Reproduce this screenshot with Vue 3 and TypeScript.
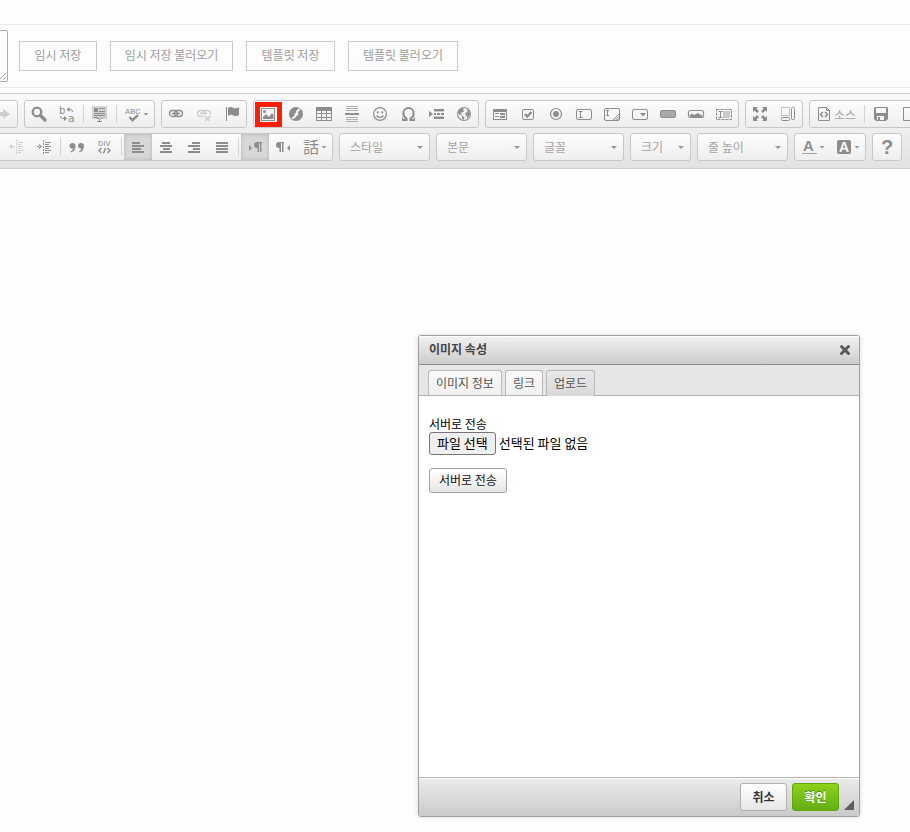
<script setup lang="ts">
import { ref } from 'vue'

interface Tool {
  icon?: string
  title?: string
  sep?: boolean
  off?: boolean
  active?: boolean
  marked?: boolean
  arrow?: boolean
  text?: string
}

interface Combo {
  label: string
  narrow?: boolean
}

const drafts = [
  { label: '임시 저장', width: 78 },
  { label: '임시 저장 불러오기', width: 123 },
  { label: '템플릿 저장', width: 89 },
  { label: '템플릿 불러오기', width: 110 },
]

const sep: Tool = { sep: true }

const topGroups: Tool[][] = [
  [{ icon: 'redo', title: '다시 실행', off: true }],
  [
    { icon: 'find', title: '찾기' },
    { icon: 'replace', title: '바꾸기' },
    sep,
    { icon: 'selectAll', title: '모두 선택' },
    sep,
    { icon: 'spell', title: '맞춤법 검사', arrow: true },
  ],
  [
    { icon: 'link', title: '링크 삽입' },
    { icon: 'unlink', title: '링크 지우기', off: true },
    { icon: 'flag', title: '책갈피' },
  ],
  [
    { icon: 'image', title: '이미지', marked: true },
    { icon: 'flash', title: '플래시' },
    { icon: 'table', title: '표' },
    { icon: 'rule', title: '가로 줄' },
    { icon: 'smiley', title: '이모티콘' },
    { icon: 'omega', title: '특수문자' },
    { icon: 'pageBreak', title: '페이지 나누기' },
    { icon: 'globe', title: '아이프레임' },
  ],
  [
    { icon: 'form', title: '폼' },
    { icon: 'checkbox', title: '체크박스' },
    { icon: 'radio', title: '라디오 버튼' },
    { icon: 'textField', title: '한 줄 입력 칸' },
    { icon: 'textArea', title: '여러 줄 입력 칸' },
    { icon: 'selectField', title: '선택 목록' },
    { icon: 'button', title: '버튼' },
    { icon: 'imageButton', title: '이미지 버튼' },
    { icon: 'hidden', title: '숨은 입력 칸' },
  ],
  [
    { icon: 'maximize', title: '최대화' },
    { icon: 'blocks', title: '블록 보기' },
  ],
  [
    { icon: 'source', title: '소스', text: '소스' },
    sep,
    { icon: 'save', title: '저장' },
    { icon: 'page', title: '새 문서' },
  ],
]

const paragraph: Tool[] = [
  { icon: 'outdent', title: '내어쓰기', off: true },
  { icon: 'indent', title: '들여쓰기' },
  sep,
  { icon: 'quote', title: '인용 단락' },
  { icon: 'div', title: 'DIV 컨테이너' },
  sep,
  { icon: 'alignLeft', title: '왼쪽 정렬', active: true },
  { icon: 'alignCenter', title: '가운데 정렬' },
  { icon: 'alignRight', title: '오른쪽 정렬' },
  { icon: 'justify', title: '양쪽 맞춤' },
  sep,
  { icon: 'ltr', title: '왼쪽에서 오른쪽', active: true },
  { icon: 'rtl', title: '오른쪽에서 왼쪽' },
  { icon: 'language', title: '언어 설정', arrow: true },
]

const combos: Combo[] = [
  { label: '스타일' },
  { label: '본문' },
  { label: '글꼴' },
  { label: '크기', narrow: true },
  { label: '줄 높이' },
]

const tailGroups: Tool[][] = [
  [
    { icon: 'textColor', title: '글자 색상', arrow: true },
    { icon: 'backColor', title: '배경 색상', arrow: true },
  ],
  [{ icon: 'about', title: '정보' }],
]

const bars = (rows: [number, number][]): string =>
  rows.map(([x, w], i) => `<rect x="${x}" y="${3 + 3 * i}" width="${w}" height="2"/>`).join('')

const sans = 'font-family="Liberation Sans, sans-serif"'
const small = 'font-family="Roboto, sans-serif" font-size="8"'
const line = 'fill="none" stroke="currentColor"'

const icons: Record<string, string> = {
  redo: '<path d="M3 6h5V3l7 5-7 5v-3H3z"/>',
  find: `<circle cx="6" cy="6" r="4.300" ${line} stroke-width="2.300"/><path d="M9.500 9.500l4.500 4.500" ${line} stroke-width="3.400" stroke-linecap="round"/>`,
  replace: `<text x="0" y="8" font-size="10" font-family="DejaVu Sans, sans-serif">b</text><text x="9" y="16" font-size="11" font-family="DejaVu Sans, sans-serif">a</text><path d="M9 3.500h2.500q2 0 2 2.500M1.500 10q0 2.500 2 2.500H6" ${line}/><path d="M10.500 1v5L7.500 3.500zM5 10v5l3-2.500z"/>`,
  selectAll: `<path d="M0 0h15v13h-5v-1H5v1H0z" opacity=".35"/><path d="M2 2h4v4H2zM7 2h6v1H7zM7 5h6v1H7zM2 7h11v1H2zM2 9h11v1H2zM2 11h4v1H2z"/><path d="M5 12.500h2M8 12.500h2M7.500 13v3M5 15.500h5" ${line}/>`,
  spell: `<text x="0" y="8" ${small}>ABC</text><path d="M4.500 11l3 3.200L13 9" ${line} stroke-width="2.400"/>`,
  link: `<rect x="1.500" y="4.500" width="8" height="6" rx="3" ${line} stroke-width="1.300"/><rect x="6.500" y="4.500" width="8" height="6" rx="3" ${line} stroke-width="1.300"/><path d="M4 7.500h8" ${line} stroke-width="1.600"/>`,
  unlink: `<path d="M7.500 10.500h-3a3 3 0 0 1 0-6h2a3 3 0 0 1 3 2M14 9a3 3 0 0 0-2.500-4.500h-2a3 3 0 0 0-3 3M4 7.500h7" ${line} stroke-width="1.400"/><path d="M9 10l5 5M14 10l-5 5" ${line} stroke-width="1.700"/>`,
  flag: `<path d="M2 1h1v14H2z"/><path d="M4 2q3-2 5.500 0 2.500 1 5.500-1v8q-3 2-5.500.500Q7 8 4 10z"/>`,
  image: `<path d="M1 2v13h14V2zm1 1h12v11H2z" fill-rule="evenodd"/><circle cx="4.500" cy="5.500" r="1.500"/><path d="M3 13v-2l3-3 3 3 3-4 1.500 2v4z"/>`,
  flash: `<circle cx="8" cy="8" r="7"/><path d="M12 3.500Q9.500 3.800 8.800 6.500 7.800 11.500 4 12.300M6.500 8.300h4" fill="none" stroke="#fafafa" stroke-width="1.800"/>`,
  table: `<path d="M0 1h16v14H0zM1 5v2h4V5zm5 0v2h4V5zm5 0v2h4V5zM1 8v3h4V8zm5 0v3h4V8zm5 0v3h4V8zM1 12v2h4v-2zm5 0v2h4v-2zm5 0v2h4v-2z" fill-rule="evenodd"/>`,
  rule: `<path d="M1 7h14v2H1z"/><path d="M2 0h12v1H2zM2 2h12v1H2zM2 4h12v1H2zM2 11h12v1H2zM2 13h12v1H2zM2 15h12v1H2z" opacity=".65"/>`,
  smiley: `<circle cx="8" cy="8" r="6.400" ${line} stroke-width="1.200"/><circle cx="5.700" cy="6.300" r="1.100"/><circle cx="10.300" cy="6.300" r="1.100"/><path d="M4.500 9.500q3.500 4 7 0" ${line} stroke-width="1.200"/>`,
  omega: `<path d="M2 14h4.500v-1.500C4 11 3.200 9 3.400 7a5.100 5.100 0 0 1 10.200 0c.2 2-.6 4-3.100 5.500V14H15" ${line} stroke-width="2"/><path d="M2.500 11.500V14M14.500 11.500V14" ${line}/>`,
  pageBreak: `<path d="M1 5l4 3-4 3zM6 3h10v2H6zM6 11h10v2H6z"/><path d="M6 7h2v2H6zM9 7h3v2H9zM13 7h3v2h-3z"/><path d="M6 5h10v1H6zM6 10h10v1H6z" opacity=".4"/>`,
  globe: `<circle cx="8" cy="8" r="6.500" ${line} stroke-width="1.100"/><path d="M2.500 5l3-3L8 2.500 7 4l1.500 1L6 6.500 4.500 7 6 9.500 4 9 2 7zM11 3l2 1.500 1 3.500-1.500 3-1.500 1-.5-2.500L9 8l1-1.500 1.500-.5zM6 10l2.500 1-1 3L6 12.500z"/>`,
  form: `<path d="M1 3h14v11H1zM2 6v7h12V6z" fill-rule="evenodd"/><path d="M3 7h4v1H3zM3 10h4v1H3zM8 7h5v2H8zM8 10h5v2H8z"/>`,
  checkbox: `<rect x="2.500" y="3.500" width="11" height="10" rx="1.500" ${line}/><path d="M5 8l2.200 2.500L11.500 6" ${line} stroke-width="2.300"/>`,
  radio: `<circle cx="8" cy="8" r="5.500" ${line} stroke-width="1.200"/><circle cx="8" cy="8" r="3"/>`,
  textField: `<rect x=".5" y="3.500" width="15" height="10" rx="1.500" ${line}/><path d="M2.500 5.500h4M4.500 5.500v6M2.500 11.500h4" ${line}/>`,
  textArea: `<rect x=".5" y="2.500" width="15" height="12" rx="1.500" ${line}/><path d="M2 4.500h3M3.500 4.500v5M2 9.500h3M9 14l6-6M11.500 14l3.500-3.500M13.500 14l1.500-1.500" ${line}/>`,
  selectField: `<rect x=".5" y="3.500" width="15" height="10" rx="1.500" ${line}/><path d="M8 7h6l-3 3.500z"/>`,
  button: `<rect x=".5" y="4.500" width="15" height="7" rx="1.500" fill="currentColor" fill-opacity=".75" stroke="currentColor"/>`,
  imageButton: `<rect x=".5" y="4.500" width="15" height="7" rx="2" ${line} stroke-width="1.200"/><path d="M2 11V9l2-1.500L6 9l2-1 2-1 2 1.500L14 9v2z"/>`,
  hidden: `<rect x=".5" y="3.500" width="15" height="10" ${line} stroke-dasharray="3 1"/><path d="M7 5h7v7H7z" opacity=".4"/><path d="M2.500 5.500h4M4.500 5.500v6M2.500 11.500h4" ${line}/>`,
  maximize: `<path d="M1 1h5L4.500 2.500l2.500 2.500-2 2-2.500-2.500L1 6zM15 1v5l-1.500-1.500L11 7 9 5l2.500-2.500L10 1zM1 15v-5l1.500 1.500L5 9l2 2-2.500 2.500L6 15zM15 15h-5l1.500-1.500L9 11l2-2 2.500 2.500L15 10z"/>`,
  blocks: `<path d="M1.500 1.500h8v8h-8z" ${line} stroke-dasharray="1 1"/><rect x="11.500" y="1.500" width="3" height="12" rx="1" ${line}/><rect x="1.500" y="11.500" width="8" height="3" rx="1" ${line}/>`,
  source: `<path d="M2.500 1.500h8l3 3v10h-11zM10.500 1.500v3h3" ${line}/><path d="M7 6L4.500 8.500 7 11M9 6l2.500 2.500L9 11" ${line} stroke-width="1.500"/>`,
  save: `<path d="M2.500 1h11A1.500 1.500 0 0 1 15 2.500V13l-2 2H3l-2-2V2.500A1.500 1.500 0 0 1 2.500 1zM3 2v5h10V2zM4 10v4h7v-4z" fill-rule="evenodd"/><path d="M5 11h2v3H5zM1 7h14v2H1z"/>`,
  page: `<path d="M2.500 1.500h8l3 3v10h-11z" ${line}/>`,
  outdent: `<path d="M4 7h3v1H4zM4 5v5L1 7.500zM8 1h1v2H8zM8 4h1v2H8zM8 7h1v2H8zM8 10h1v2H8zM8 13h1v2H8zM10 3h5v1h-5zM10 5h3v1h-3zM10 7h5v1h-5zM10 9h3v1h-3zM10 11h5v1h-5zM10 13h3v1h-3z"/>`,
  indent: `<path d="M1 7h3v1H1zM3 5v5l3-2.500zM7 1h1v2H7zM7 4h1v2H7zM7 7h1v2H7zM7 10h1v2H7zM7 13h1v2H7zM9 3h6v1H9zM9 5h4v1H9zM9 7h6v1H9zM9 9h4v1H9zM9 11h6v1H9zM9 13h4v1H9z"/>`,
  quote: `<path d="M3.500 4a3 3 0 0 1 3 3Q6.500 12 2 13.500L1.500 12.500Q4 11 4 9.500A2.800 2.800 0 1 1 3.500 4zM12 4a3 3 0 0 1 3 3q0 5-4.500 6.500l-.5-1Q12.500 11 12.500 9.500A2.800 2.800 0 1 1 12 4z"/>`,
  div: `<text x="1" y="7" ${small}>DIV</text><path d="M4.500 9L2 11.500 4.500 14M10.500 9l2.500 2.500-2.500 2.500M8.500 9l-2 5.500" ${line} stroke-width="1.400"/>`,
  alignLeft: bars([[2, 8], [2, 12], [2, 9], [2, 12]]),
  alignCenter: bars([[4, 8], [2, 12], [5, 7], [2, 12]]),
  alignRight: bars([[6, 8], [2, 12], [7, 7], [2, 12]]),
  justify: bars([[2, 12], [2, 12], [2, 12], [2, 12]]),
  ltr: `<path d="M2 6l3 3-3 3z"/><path d="M15 3h-5a3 3 0 0 0 0 6h.5v4H12V4h1v9h1.500V4h.5z"/>`,
  rtl: `<path d="M15 6l-3 3 3 3z"/><path d="M9 3H4a3 3 0 0 0 0 6h.5v4H6V4h1v9h1.500V4H9z"/>`,
  language: `<text x="0" y="14" font-size="16" font-family="Noto Sans CJK JP, sans-serif">話</text>`,
  textColor: `<text x="2" y="12" font-size="15" font-weight="bold" ${sans}>A</text><path d="M1 14h15v1H1z" opacity=".8"/>`,
  backColor: `<rect x="1" y="1" width="14" height="14" rx="2"/><text x="3" y="13" font-size="14" font-weight="bold" fill="#fafafa" ${sans}>A</text>`,
  about: `<text x="2" y="15" font-size="20" font-weight="bold" ${sans}>?</text>`,
}

const tabs = ['이미지 정보', '링크', '업로드']
const currentTab = ref(2)
const fileName = ref('선택된 파일 없음')

function pickFile(event: Event) {
  const files = (event.target as HTMLInputElement).files
  fileName.value = files && files.length ? files[0].name : '선택된 파일 없음'
}
</script>

<template>
  <div class="page">
    <form class="drafts" @submit.prevent>
      <textarea class="memo" aria-label="메모"></textarea>
      <button
        v-for="d in drafts"
        :key="d.label"
        type="button"
        class="draft"
        :style="{ width: d.width + 'px' }"
      >{{ d.label }}</button>
    </form>

    <div class="toolbar" role="toolbar">
      <div class="row">
        <div v-for="(group, g) in topGroups" :key="g" class="group">
          <template v-for="(t, i) in group" :key="i">
            <span v-if="t.sep" class="sep"></span>
            <button
              v-else
              type="button"
              class="tool"
              :class="{ off: t.off, marked: t.marked, wide: t.arrow, labelled: t.text }"
              :aria-label="t.title"
            >
              <svg class="icon" viewBox="0 0 16 16" fill="currentColor" v-html="icons[t.icon!]"></svg>
              <span v-if="t.text" class="caption">{{ t.text }}</span>
              <span v-if="t.arrow" class="caret"></span>
            </button>
          </template>
        </div>
      </div>

      <div class="row">
        <div class="group cut">
          <template v-for="(t, i) in paragraph" :key="i">
            <span v-if="t.sep" class="sep"></span>
            <button
              v-else
              type="button"
              class="tool"
              :class="{ off: t.off, active: t.active, wide: t.arrow }"
              :aria-label="t.title"
            >
              <svg class="icon" viewBox="0 0 16 16" fill="currentColor" v-html="icons[t.icon!]"></svg>
              <span v-if="t.arrow" class="caret"></span>
            </button>
          </template>
        </div>

        <div v-for="c in combos" :key="c.label" class="combo" :class="{ narrow: c.narrow }">
          <select class="combo-select" :aria-label="c.label">
            <option>{{ c.label }}</option>
          </select>
          <span class="caret"></span>
        </div>

        <div v-for="(group, g) in tailGroups" :key="'t' + g" class="group">
          <button
            v-for="t in group"
            :key="t.icon"
            type="button"
            class="tool"
            :class="{ wide: t.arrow }"
            :aria-label="t.title"
          >
            <svg class="icon" viewBox="0 0 16 16" fill="currentColor" v-html="icons[t.icon!]"></svg>
            <span v-if="t.arrow" class="caret"></span>
          </button>
        </div>
      </div>
    </div>

    <section class="dialog" role="dialog" aria-labelledby="dialog-title">
      <header class="title-bar">
        <h1 id="dialog-title" class="title">이미지 속성</h1>
        <button type="button" class="close" aria-label="닫기">
          <svg class="close-icon" viewBox="0 0 12 12">
            <path d="M2.500 2.500l7 7M9.500 2.500l-7 7" fill="none" stroke="#5a5a5a" stroke-width="3" stroke-linecap="round" />
          </svg>
        </button>
      </header>
      <div class="tabs" role="tablist">
        <button
          v-for="(tab, i) in tabs"
          :key="tab"
          type="button"
          role="tab"
          class="tab"
          :class="{ current: i === currentTab }"
          :aria-selected="i === currentTab"
          @click="currentTab = i"
        >{{ tab }}</button>
      </div>
      <div class="body">
        <label class="field-label" for="upload">서버로 전송</label>
        <div class="file">
          <span class="file-button">파일 선택</span>
          <span class="file-name">{{ fileName }}</span>
          <input id="upload" class="file-input" type="file" @change="pickFile" />
        </div>
        <button type="button" class="send">서버로 전송</button>
      </div>
      <footer class="footer">
        <button type="button" class="action">취소</button>
        <button type="button" class="action ok">확인</button>
        <span class="grip"></span>
      </footer>
    </section>
  </div>
</template>

<style>
body {
  background: #fdfdfd;
}
</style>

<style scoped>
.page {
  position: relative;
  box-sizing: border-box;
  min-height: 100vh;
  padding-top: 24px;
  overflow: hidden;
  font-family: "Noto Sans CJK KR", "Liberation Sans", sans-serif;
  font-size: 12px;
}

.page * {
  box-sizing: border-box;
}

button,
select,
textarea {
  margin: 0;
  padding: 0;
  font-family: inherit;
  font-size: 12px;
}

.drafts {
  display: flex;
  align-items: center;
  gap: 13px;
  height: 64px;
  border-top: 1px solid #e9e9e9;
  border-bottom: 1px solid #e9e9e9;
}

.memo {
  width: 60px;
  height: 52px;
  margin: 0 -2px 0 -52px;
  border: 1px solid #767676;
  border-radius: 2px;
  background: #fdfdfd;
  opacity: 0.6;
}

.draft {
  height: 30px;
  padding-bottom: 2px;
  border: 1px solid #cacaca;
  background: #fdfdfd;
  color: #9c9c9c;
  line-height: 26px;
  white-space: nowrap;
}

.toolbar {
  display: flex;
  flex-direction: column;
  gap: 5px;
  margin-top: 5px;
  padding: 6px 0 7px;
  border-top: 1px solid #cfcfcf;
  border-bottom: 1px solid #cfcfcf;
  background: linear-gradient(#fafafa, #e2e2e2);
  color: #8d8d8d;
}

.row {
  display: flex;
  gap: 6px;
  margin-left: -12px;
}

.group {
  display: flex;
  flex: none;
  height: 28px;
  border: 1px solid #c8c8c8;
  border-radius: 3px;
  background: linear-gradient(#fdfdfd, #eeeeee);
}

.cut {
  padding-left: 13px;
}

.tool {
  position: relative;
  display: flex;
  align-items: center;
  flex: none;
  width: 28px;
  height: 26px;
  padding-left: 6px;
  border: 0;
  background: none;
  color: inherit;
}

.wide {
  width: 35px;
  gap: 2px;
}

.labelled {
  width: 52px;
  gap: 2px;
}

.off {
  color: #cecece;
}

.active {
  background: #d8d8d8;
  box-shadow: inset 0 0 4px #b4b4b4;
}

.marked::after {
  content: "";
  position: absolute;
  inset: 1px 0 0 1px;
  border: 5px solid #ff1f00;
}

.icon {
  flex: none;
  width: 16px;
  height: 16px;
  overflow: visible;
}

.caption {
  color: #a3a3a3;
  white-space: nowrap;
}

.caret {
  flex: none;
  width: 6px;
  height: 3px;
  background: #979797;
  clip-path: polygon(0 0, 100% 0, 50% 100%);
}

.sep {
  width: 1px;
  height: 18px;
  margin: 4px 2px;
  background: #d3d3d3;
}

.combo {
  position: relative;
  flex: none;
  width: 91px;
  height: 28px;
}

.narrow {
  width: 61px;
}

.combo-select {
  width: 100%;
  height: 28px;
  padding: 0 18px 2px 10px;
  border: 1px solid #c8c8c8;
  border-radius: 3px;
  background: linear-gradient(#fdfdfd, #eeeeee);
  color: #a3a3a3;
  appearance: none;
}

.combo .caret {
  position: absolute;
  top: 13px;
  right: 7px;
  pointer-events: none;
}

.dialog {
  position: absolute;
  top: 335px;
  left: 418px;
  display: flex;
  flex-direction: column;
  width: 442px;
  height: 482px;
  border: 1px solid #a0a0a0;
  border-radius: 3px;
  background: #ffffff;
  box-shadow: 0 0 4px rgba(0, 0, 0, 0.15);
  overflow: hidden;
}

.title-bar {
  display: flex;
  align-items: center;
  justify-content: space-between;
  height: 29px;
  padding: 0 8px 0 10px;
  border-bottom: 1px solid #8c8c8c;
  background: linear-gradient(#f2f2f2, #cbcdcb);
  box-shadow: inset 0 1px 0 #ffffff;
}

.title {
  margin: 0;
  padding-bottom: 3px;
  color: #444444;
  font-size: 12px;
  font-weight: bold;
  line-height: 18px;
}

.close {
  display: flex;
  border: 0;
  background: none;
}

.close-icon {
  width: 12px;
  height: 12px;
}

.tabs {
  display: flex;
  align-items: flex-end;
  gap: 3px;
  height: 31px;
  padding-left: 9px;
  border-bottom: 1px solid #b5b5b5;
  background: #e6e6e6;
}

.tab {
  height: 25px;
  padding: 0 7px 2px;
  border: 1px solid #b9b9b9;
  border-bottom: 0;
  border-radius: 3px 3px 0 0;
  background: linear-gradient(#fafafa, #f0f0f0);
  color: #555555;
  white-space: nowrap;
}

.current {
  height: 26px;
  margin-bottom: -1px;
  padding-bottom: 3px;
  background: linear-gradient(#e9e9e9, #d8d8d8);
}

.body {
  display: flex;
  flex: 1;
  flex-direction: column;
  align-items: flex-start;
  padding: 20px 10px;
}

.field-label {
  color: #000000;
  line-height: 16px;
}

.file {
  position: relative;
  display: flex;
  align-items: center;
  gap: 3px;
  margin-bottom: 13px;
  color: #000000;
  font-size: 13px;
}

.file-button {
  height: 23px;
  padding: 0 7px;
  border: 1px solid #767676;
  border-radius: 3px;
  background: #efefef;
  line-height: 19px;
}

.file-name {
  padding-bottom: 2px;
  line-height: 19px;
}

.file-input {
  position: absolute;
  inset: 0;
  width: 100%;
  opacity: 0;
}

.send,
.action {
  border: 1px solid #b0b0b0;
  border-radius: 3px;
  background: linear-gradient(#ffffff, #e6e6e6);
  color: #333333;
}

.send {
  height: 25px;
  padding: 0 9px 3px;
  border-color: #a2a2a2;
  color: #111111;
}

.footer {
  display: flex;
  align-items: center;
  justify-content: flex-end;
  gap: 5px;
  height: 39px;
  padding-right: 5px;
  border-top: 1px solid #b2b2b2;
  background: linear-gradient(#ebebeb, #c9cbc9);
  box-shadow: inset 0 1px 0 #ffffff;
}

.action {
  width: 47px;
  height: 28px;
  padding-bottom: 2px;
  font-weight: bold;
}

.ok {
  border-color: #62a60a;
  background: linear-gradient(#8dd31a, #63ae14);
  color: #ffffff;
  text-shadow: 0 -1px 0 #55830c;
}

.grip {
  align-self: flex-end;
  width: 10px;
  height: 10px;
  margin-bottom: 6px;
  background: #5f5f5f;
  clip-path: polygon(100% 0, 100% 100%, 0 100%);
}
</style>
